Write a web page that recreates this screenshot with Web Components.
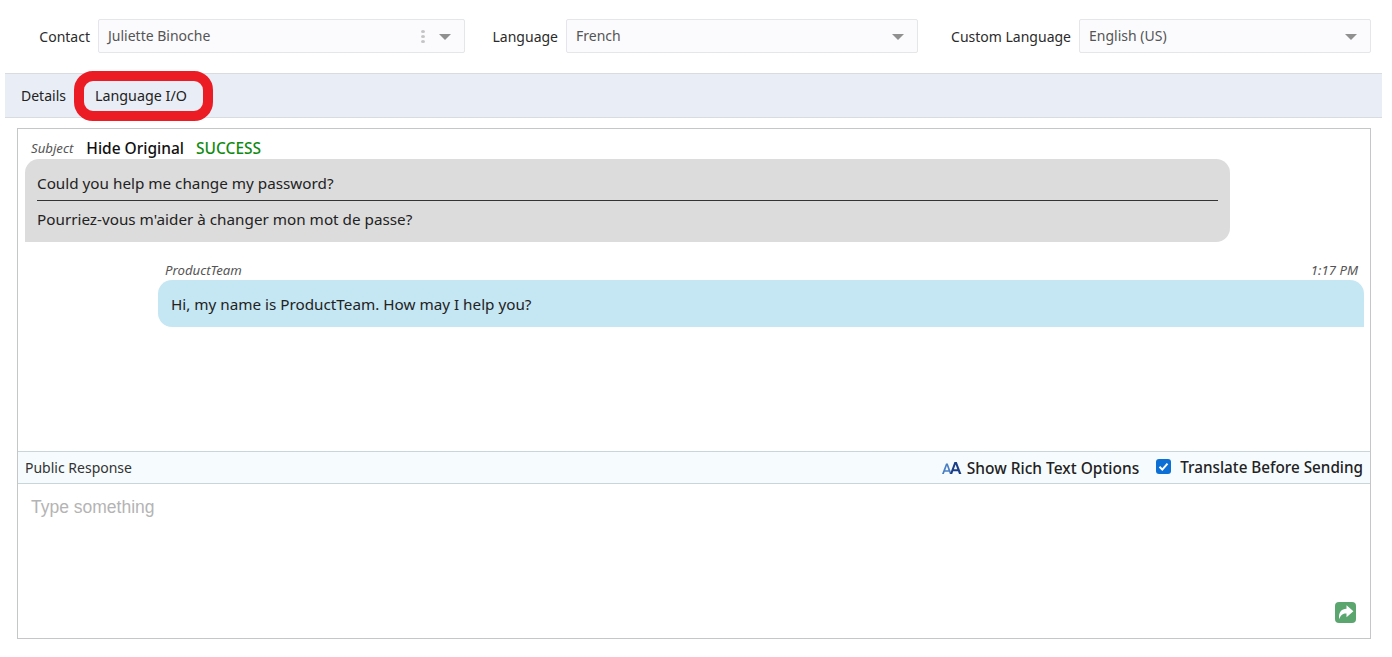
<!DOCTYPE html>
<html>
<head>
<meta charset="utf-8">
<title>Language I/O</title>
<style>
  html, body { margin: 0; padding: 0; background: #fff; }
  body { font-family: "Noto Sans", "Open Sans", sans-serif; font-size: 14px; color: #222; }
</style>
</head>
<body>
<lio-app></lio-app>

<script>
// one select style field with its label on the left
class LioField extends HTMLElement {
  constructor() {
    super();
    this.attachShadow({ mode: 'open' });
  }

  connectedCallback() {
    const dots = this.hasAttribute('dots') ? `<span class="dots"><i></i><i></i><i></i></span>` : '';
    this.shadowRoot.innerHTML = `
      <style>
        :host { display: flex; align-items: center; flex: none; }
        label { flex: none; width: var(--label-w); text-align: right; margin-right: 8px; font-size: 14px; color: #2b2b2b; white-space: nowrap; }
        .box { box-sizing: border-box; width: var(--box-w); height: 34px; display: flex; align-items: center; padding: 0 13px 2px 9px; background: #fbfbfd; border: 1px solid #e4e6ea; border-radius: 2px; color: #555; font-size: 14px; }
        .val { flex: 1; }
        .dots { display: flex; flex-direction: column; gap: 2px; margin-right: 14px; margin-top: 2px; }
        .dots i { width: 4px; height: 3px; background: #c4c4c4; border-radius: 50%; }
        .arrow { width: 0; height: 0; border-left: 6.5px solid transparent; border-right: 6.5px solid transparent; border-top: 6.5px solid #909090; margin-top: 3px; }
      </style>
      <label>${this.getAttribute('label')}</label>
      <div class="box">
        <span class="val"><slot></slot></span>
        ${dots}
        <span class="arrow"></span>
      </div>
    `;
  }
}

class LioTabs extends HTMLElement {
  constructor() {
    super();
    this.attachShadow({ mode: 'open' });
  }

  connectedCallback() {
    this.shadowRoot.innerHTML = `
      <style>
        :host { display: flex; align-items: center; position: relative; box-sizing: border-box; height: 45px; margin: 0 10px 0 5px; padding-left: 16px; background: #e9edf5; border-top: 1px solid #d8dbe0; border-bottom: 1px solid #d8dbe0; font-size: 14px; color: #222; }
        .tab { white-space: nowrap; }
        .active { margin-left: 29px; font-size: 14.3px; }
        /* red marker painted on top of the screenshot */
        .mark { position: absolute; left: 69px; top: -3px; width: 139px; height: 50px; box-sizing: border-box; border: 10px solid #ec1c24; border-radius: 19px; }
      </style>
      <span class="tab">Details</span>
      <span class="tab active">Language I/O</span>
      <span class="mark"></span>
    `;
  }
}

class LioSubject extends HTMLElement {
  constructor() {
    super();
    this.attachShadow({ mode: 'open' });
  }

  connectedCallback() {
    this.shadowRoot.innerHTML = `
      <style>
        :host { display: block; }
        .head { display: flex; align-items: center; height: 30px; padding: 8px 0 0 13px; box-sizing: border-box; }
        em { font-size: 13.2px; color: #555; margin-right: 13px; }
        b { font-weight: 500; font-size: 15.5px; color: #111; margin-right: 12px; }
        .ok { color: #118a11; margin: 0; }
        .bubble { box-sizing: border-box; width: 1205px; height: 83px; margin-left: 7px; padding: 0 12px; background: #dcdcdc; border-radius: 14px 14px 14px 0; font-size: 15.25px; color: #222; }
        .line { box-sizing: border-box; height: 41px; display: flex; align-items: center; padding-top: 6px; }
        .line + .line { border-top: 1px solid #333; padding-top: 0; padding-bottom: 4px; }
      </style>
      <div class="head"><em>Subject</em><b>Hide Original</b><b class="ok">SUCCESS</b></div>
      <div class="bubble">
        <div class="line">Could you help me change my password?</div>
        <div class="line">Pourriez-vous m'aider à changer mon mot de passe?</div>
      </div>
    `;
  }
}

class LioMessage extends HTMLElement {
  constructor() {
    super();
    this.attachShadow({ mode: 'open' });
  }

  connectedCallback() {
    this.shadowRoot.innerHTML = `
      <style>
        :host { display: block; margin: 20px 6px 0 140px; }
        .meta { display: flex; justify-content: space-between; height: 18px; box-sizing: border-box; padding: 0 6px 2px 7px; align-items: center; font-size: 13.2px; font-style: italic; color: #555; }
        .bubble { box-sizing: border-box; height: 47px; display: flex; align-items: center; padding: 0 13px; background: #c5e6f3; border-radius: 14px 14px 0 14px; font-size: 15.25px; color: #222; }
      </style>
      <div class="meta"><span>${this.getAttribute('from')}</span><span>${this.getAttribute('time')}</span></div>
      <div class="bubble"><slot></slot></div>
    `;
  }
}

class LioResponse extends HTMLElement {
  constructor() {
    super();
    this.attachShadow({ mode: 'open' });
  }

  connectedCallback() {
    this.shadowRoot.innerHTML = `
      <style>
        :host { display: flex; flex-direction: column; flex: 1; min-height: 0; }
        .bar { flex: none; box-sizing: border-box; height: 33px; display: flex; align-items: center; padding: 0 7px 1px 7px; background: #f6fbfe; border-top: 1px solid #c8d6dc; border-bottom: 1px solid #c8d6dc; }
        .title { flex: 1; font-size: 14px; color: #333; }
        .rich { display: flex; align-items: center; font-size: 15.5px; font-weight: 500; color: #222; margin-right: 17px; padding-top: 2px; }
        .rich svg { margin-right: 5px; }
        .tr { display: flex; align-items: center; font-size: 15.25px; font-weight: 500; color: #222; }
        .check { width: 15px; height: 15px; border-radius: 3px; background: #0b6fd6; margin-right: 9px; margin-top: -1px; display: flex; align-items: center; justify-content: center; }
        .edit { flex: 1; position: relative; padding: 13px 13px; font-family: "Liberation Sans", Arial, sans-serif; font-size: 17.5px; color: #b4b4b4; }
        .send { position: absolute; right: 14px; bottom: 15px; width: 21px; height: 21px; }
      </style>
      <div class="bar">
        <span class="title">Public Response</span>
        <span class="rich">
          <svg width="20" height="14" viewBox="0 0 20 14"><path d="M0 13 L4 2.6 L5.8 2.6 L9.6 13 L7.8 13 L7 10.8 L2.7 10.8 L1.9 13 Z M3.3 9.2 L6.4 9.2 L4.9 4.8 Z" fill="#4a7fc4"/><path d="M8 13 L12.4 1 L14.8 1 L19.4 13 L17 13 L16 10.2 L11.2 10.2 L10.2 13 Z M11.9 8.2 L15.3 8.2 L13.6 3.6 Z" fill="#1b3f87"/></svg>
          Show Rich Text Options
        </span>
        <span class="tr">
          <span class="check"><svg width="11" height="11" viewBox="0 0 11 11"><path d="M1.5 5.8 L4.3 8.6 L9.5 2.6" fill="none" stroke="#fff" stroke-width="2"/></svg></span>
          Translate Before Sending
        </span>
      </div>
      <div class="edit">
        Type something
        <svg class="send" viewBox="0 0 21 21"><rect width="21" height="21" rx="4" fill="#5ba56f"/><path d="M11.5 3.2 L18.4 9.2 L11.5 15.2 L11.5 11.6 C8.2 11.4 5.8 12.8 4.2 17.2 C3.2 10.4 6.4 7 11.5 6.8 Z" fill="#fff"/></svg>
      </div>
    `;
  }
}

class LioApp extends HTMLElement {
  constructor() {
    super();
    this.attachShadow({ mode: 'open' });
  }

  connectedCallback() {
    this.shadowRoot.innerHTML = `
      <style>
        :host { display: block; height: 657px; overflow: hidden; }
        .fields { display: flex; height: 73px; box-sizing: border-box; padding: 19px 0 20px 30px; align-items: stretch; }
        .c { --label-w: 60px; --box-w: 367px; }
        .l { --label-w: 90px; --box-w: 352px; margin-left: 3px; }
        .cu { --label-w: 130px; --box-w: 292px; margin-left: 23px; }
        .panel { display: flex; flex-direction: column; box-sizing: border-box; height: 511px; margin: 10px 21px 0 17px; border: 1px solid #c4c6c8; }
        .msgs { flex: none; height: 322px; }
      </style>
      <div class="fields">
        <lio-field class="c" label="Contact" dots>Juliette Binoche</lio-field>
        <lio-field class="l" label="Language">French</lio-field>
        <lio-field class="cu" label="Custom Language">English (US)</lio-field>
      </div>
      <lio-tabs></lio-tabs>
      <div class="panel">
        <div class="msgs">
          <lio-subject></lio-subject>
          <lio-message from="ProductTeam" time="1:17 PM">Hi, my name is ProductTeam. How may I help you?</lio-message>
        </div>
        <lio-response></lio-response>
      </div>
    `;
  }
}

customElements.define('lio-field', LioField);
customElements.define('lio-tabs', LioTabs);
customElements.define('lio-subject', LioSubject);
customElements.define('lio-message', LioMessage);
customElements.define('lio-response', LioResponse);
customElements.define('lio-app', LioApp);
</script>
</body>
</html>
